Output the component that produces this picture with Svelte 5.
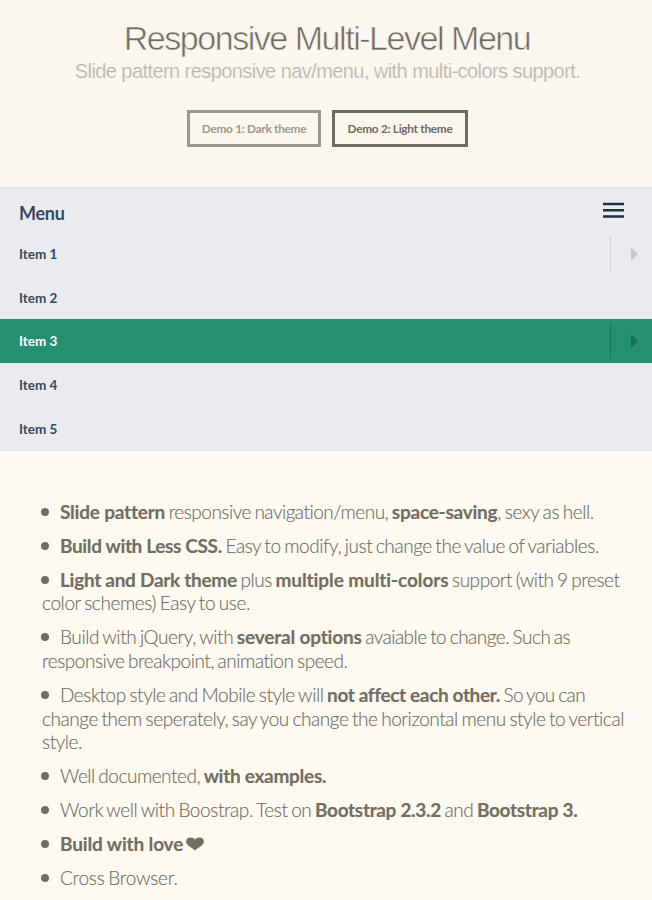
<script>
  const menu = [
    { label: 'Item 1', sub: true },
    { label: 'Item 2' },
    { label: 'Item 3', sub: true, active: true },
    { label: 'Item 4' },
    { label: 'Item 5' }
  ];

  // Each feature is a list of lines; each line is a list of text runs.
  // b marks the bold runs, ls is the run's own letter-spacing in px.
  const features = [
    [[{ b: 'Slide pattern', ls: -0.2 }, { t: ' responsive navigation/menu, ', ls: -0.5 }, { b: 'space-saving', ls: -0.24 }, { t: ', sexy as hell.', ls: -0.41 }]],
    [[{ b: 'Build with Less CSS.', ls: -0.35 }, { t: ' Easy to modify, just change the value of variables.' }]],
    [
      [{ b: 'Light and Dark theme' }, { t: ' plus ' }, { b: 'multiple multi-colors', ls: -0.09 }, { t: ' support (with 9 preset', ls: -0.47 }],
      [{ t: 'color schemes) Easy to use.', ls: -0.4 }]
    ],
    [
      [{ t: 'Build with jQuery, with ', ls: -0.42 }, { b: 'several options', ls: -0.18 }, { t: ' avaiable to change. Such as', ls: -0.52 }],
      [{ t: 'responsive breakpoint, animation speed.', ls: -0.47 }]
    ],
    [
      [{ t: 'Desktop style and Mobile style will ' }, { b: 'not affect each other.', ls: -0.36 }, { t: ' So you can', ls: -0.55 }],
      [{ t: 'change them seperately, say you change the horizontal menu style to vertical' }],
      [{ t: 'style.' }]
    ],
    [[{ t: 'Well documented, ', ls: -0.48 }, { b: 'with examples.' }]],
    [[{ t: 'Work well with Boostrap. Test on ', ls: -0.41 }, { b: 'Bootstrap 2.3.2', ls: -0.32 }, { t: ' and ' }, { b: 'Bootstrap 3.', ls: -0.3 }]],
    [[{ b: 'Build with love', ls: -0.14 }, { heart: true }]],
    [[{ t: 'Cross Browser.', ls: -0.24 }]]
  ];
</script>

<div class="page">
  <header>
    <h1>Responsive Multi-Level Menu</h1>
    <p>Slide pattern responsive nav/menu, with multi-colors support.</p>
    <div class="demos">
      <span class="demo dark">Demo 1: Dark theme</span>
      <span class="demo light">Demo 2: Light theme</span>
    </div>
  </header>

  <nav>
    <div class="bar">
      <span class="title">Menu</span>
      <svg class="burger" width="21" height="16" viewBox="0 0 21 16"><path d="M0 2.1H21M0 8.3H21M0 14.5H21" stroke="#1b3147" stroke-width="2.5" /></svg>
    </div>
    {#each menu as item}
      <div class="item" class:active={item.active}>
        <span class="label">{item.label}</span>
        {#if item.sub}
          <span class="toggle">
            <svg width="7" height="14" viewBox="0 0 7 14"><path d="M0 0L7 7L0 14Z" /></svg>
          </span>
        {/if}
      </div>
    {/each}
  </nav>

  <ul>
    {#each features as lines}
      <li>
        {#each lines as runs, i}
          <div class="line">
            {#if i === 0}<span class="dot"></span>{/if}<span class="text"
              >{#each runs as run}{#if run.b}<b style:letter-spacing={`${run.ls ?? -0.28}px`}>{run.b}</b>{:else if run.heart}<svg class="heart" width="18" height="14" viewBox="0 0 18 14"><path d="M9 13.4C6.5 11 0.1 8.8 0.1 4.6C0.1 2.1 2.1 0.6 4.6 0.6C6.6 0.6 8.3 1.4 9 2.8C9.7 1.4 11.4 0.6 13.4 0.6C15.9 0.6 17.9 2.1 17.9 4.6C17.9 8.8 11.5 11 9 13.4Z" /></svg>{:else}<span style:letter-spacing={`${run.ls ?? -0.44}px`}>{run.t}</span>{/if}{/each}</span>
          </div>
        {/each}
      </li>
    {/each}
  </ul>
</div>

<style>
  :global(body) {
    background: #fefaf2;
  }
  .page {
    height: 900px;
    overflow: hidden;
    font-family: Lato, 'Liberation Sans', sans-serif;
    background: #fefaf2;
  }
  header {
    box-sizing: border-box;
    height: 187px;
    padding: 18px 0 0 3px;
    background: #fbf6ee;
    display: flex;
    flex-direction: column;
    align-items: center;
    font-family: 'Liberation Sans', Arial, sans-serif;
  }
  h1 {
    margin: 0 1px 0 0;
    font-size: 34px;
    font-weight: 400;
    line-height: 40px;
    letter-spacing: -1.46px;
    color: #6f6b61;
    white-space: nowrap;
    -webkit-text-stroke: 0.6px #fbf6ee;
  }
  header p {
    margin: 1px 0 0;
    font-size: 20px;
    line-height: 24px;
    letter-spacing: -0.57px;
    color: #b9b6ad;
    white-space: nowrap;
    -webkit-text-stroke: 0.2px #fbf6ee;
  }
  .demos {
    display: flex;
    gap: 11px;
    margin-top: 27px;
    font-family: Lato, sans-serif;
  }
  .demo {
    box-sizing: border-box;
    height: 37px;
    border: 3px solid;
    font-size: 11.8px;
    font-weight: 700;
    line-height: 31px;
    letter-spacing: -0.28px;
    text-align: center;
    white-space: nowrap;
  }
  .dark {
    width: 134px;
    color: #9c988e;
  }
  .light {
    width: 136px;
    color: #6f6b61;
  }
  nav {
    box-sizing: border-box;
    height: 264px;
    border-top: 1px solid #e2e1df;
    border-bottom: 1px solid #dfe1e8;
    background: #eaebef;
    color: #34495e;
  }
  .bar {
    height: 44px;
    box-sizing: border-box;
    padding: 5px 28px 0 19px;
    display: flex;
    justify-content: space-between;
  }
  .title {
    font-size: 18px;
    font-weight: 700;
    line-height: 40px;
    letter-spacing: -0.25px;
  }
  .burger {
    margin-top: 9px;
  }
  .item {
    height: 43.6px;
    display: flex;
    justify-content: space-between;
    align-items: center;
    padding-left: 19px;
    font-size: 13.5px;
    font-weight: 700;
  }
  .label {
    padding-top: 0.8px;
  }
  .toggle {
    box-sizing: border-box;
    width: 42px;
    height: 35px;
    border-left: 1px solid #cfd2d7;
    padding-left: 20px;
    display: flex;
    align-items: center;
    fill: #c5cbd1;
  }
  .active {
    background: #259070;
    color: #fff;
  }
  .active .toggle {
    border-color: #1c6f57;
    fill: #1c6f57;
  }
  ul {
    margin: 0;
    padding: 49px 0 0 42px;
    list-style: none;
    color: #716e62;
  }
  li {
    margin-bottom: 10.2px;
  }
  .line {
    height: 23.7px;
    display: flex;
    align-items: center;
    font-size: 19px;
    font-weight: 300;
    line-height: 23.7px;
    word-spacing: -1.1px;
    white-space: pre;
    -webkit-text-stroke: 0.15px #716e62;
  }
  .line b {
    font-weight: 700;
    word-spacing: 0;
  }
  .dot {
    width: 8px;
    height: 8px;
    margin: 0 11px 0 -1px;
    border-radius: 50%;
    background: #716e62;
  }
  .heart {
    margin-left: 3px;
    fill: #716e62;
  }
</style>
